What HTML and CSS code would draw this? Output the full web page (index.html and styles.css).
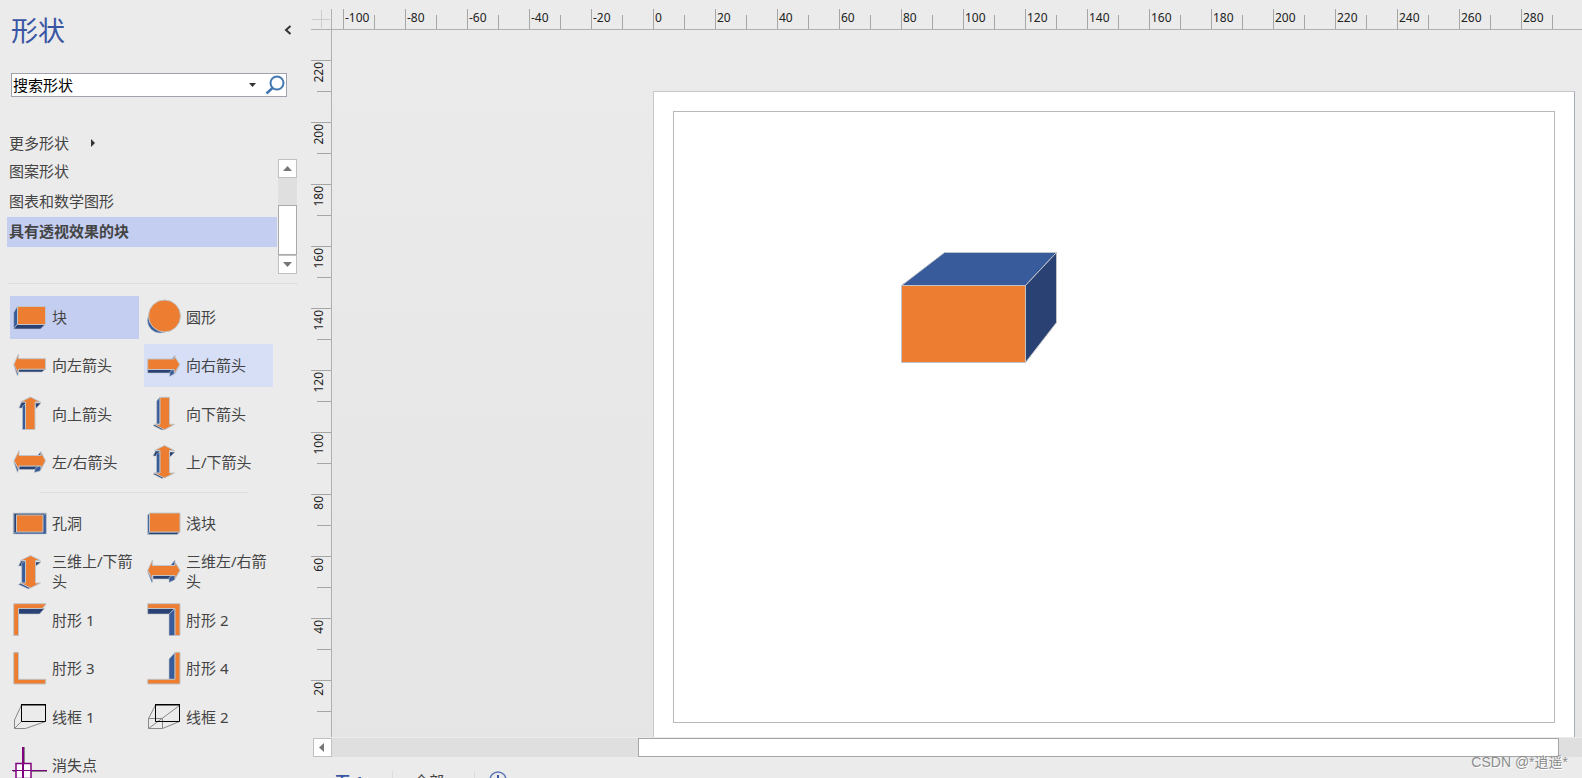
FILE: index.html
```html
<!DOCTYPE html>
<html lang="zh-CN">
<head>
    <meta charset="UTF-8">
    <meta name="viewport" content="width=device-width, initial-scale=1.0">
    <title>形状</title>
    <link rel="stylesheet" href="styles.css">
</head>
<body>
    <aside class="sidebar">
        <div class="sidebar-header">
            <h1>形状</h1>
            <button class="collapse-btn" aria-label="折叠">
                <svg width="8" height="10" viewBox="0 0 8 10"><path d="M6.500 1 2 5l4.500 4" fill="none" stroke="#333" stroke-width="2"/></svg>
            </button>
        </div>

        <div class="search-box">
            <input type="text" id="search" value="搜索形状" aria-label="搜索形状">
            <button class="search-drop" aria-label="搜索选项">
                <svg width="7" height="4" viewBox="0 0 7 4"><path d="M0 0h7L3.500 4z" fill="#333"/></svg>
            </button>
            <button class="search-btn" aria-label="搜索">
                <svg width="20" height="20" viewBox="0 0 20 20"><circle cx="12" cy="8" r="6.500" fill="none" stroke="#4478b4" stroke-width="2"/><path d="M8 12.500 1.500 18.500" stroke="#4478b4" stroke-width="2.500"/></svg>
            </button>
        </div>

        <button class="more-shapes">更多形状
            <svg width="4" height="8" viewBox="0 0 4 8"><path d="M0 0v8l4-4z" fill="#333"/></svg>
        </button>

        <div class="stencils">
            <ul class="stencil-list">
                <li>图案形状</li>
                <li>图表和数学图形</li>
                <li class="active">具有透视效果的块</li>
            </ul>
            <div class="vscroll">
                <button aria-label="向上滚动"><svg width="9" height="5" viewBox="0 0 9 5"><path d="M0 5h9L4.500 0z" fill="#777"/></svg></button>
                <div class="vscroll-thumb"></div>
                <button aria-label="向下滚动"><svg width="9" height="5" viewBox="0 0 9 5"><path d="M0 0h9L4.500 5z" fill="#777"/></svg></button>
            </div>
        </div>

        <div class="shapes">
            <button class="shape selected">
                <svg class="icon" viewBox="0 0 34 34">
                    <path class="mid" d="M.7 11.500 4.500 5v18L.7 28z"/>
                    <path class="dark" d="M.7 28l3.800-5h28l-5 5z"/>
                    <path class="front" d="M4.500 5.500h28v18h-28z"/>
                </svg>
                <span>块</span>
            </button>
            <button class="shape">
                <svg class="icon" viewBox="0 0 34 34">
                    <circle class="mid" cx="13" cy="19.500" r="12.500"/>
                    <circle class="front" cx="17.500" cy="15" r="16"/>
                </svg>
                <span>圆形</span>
            </button>
            <button class="shape">
                <svg class="icon" viewBox="0 0 34 34">
                    <path class="mid" d="M.7 16l5 7-1.200 4z"/>
                    <path class="dark" d="M5.500 20h27l-3.500 3H5.500z"/>
                    <path class="front" d="M.8 15.500 5.500 5v4.700h27v10.500h-27V25z"/>
                </svg>
                <span>向左箭头</span>
            </button>
            <button class="shape hover">
                <svg class="icon" viewBox="0 0 34 34">
                    <path class="mid" d="M24 11l4-4.500V12z"/>
                    <path class="dark" d="M.7 20.500h26l-3 3.500H.7z"/>
                    <path class="mid" d="M32 17l-4 7.500-5.500 3 .5-5z"/>
                    <path class="front" d="M.7 10h26.500V6.500l5.500 9-5.500 9v-4H.7z"/>
                </svg>
                <span>向右箭头</span>
            </button>
            <button class="shape">
                <svg class="icon" viewBox="0 0 34 34">
                    <path class="dark" d="M6 10l2.500-6h5l-4 6zM22 5h6l-5 5.500z"/>
                    <path class="mid" d="M9.500 8l3-2v25.500h-3z"/>
                    <path class="front" d="M7.500 4l10-5 10 5H22v27.500h-9.500V4z"/>
                </svg>
                <span>向上箭头</span>
            </button>
            <button class="shape">
                <svg class="icon" viewBox="0 0 34 34">
                    <path class="mid" d="M9.700 3l3.300-4v27H9.700z"/>
                    <path class="dark" d="M6 27.500l3-1.500 9 5-3 1z"/>
                    <path class="front" d="M13-.700h9.500v27h5l-10 5.500-10-5.500H13z"/>
                </svg>
                <span>向下箭头</span>
            </button>
            <button class="shape">
                <svg class="icon" viewBox="0 0 34 34">
                    <path class="mid" d="M.7 15.500l5 7-1.200 4zM24 10l4-4.500V12z"/>
                    <path class="dark" d="M5 20h22l-2 3.500H5z"/>
                    <path class="mid" d="M32 16l-5 9-5.500 1.500.5-4z"/>
                    <path class="front" d="M1 14.700 6 4.500v5h22v-3.500l4.500 8.700-4.500 8.500V20H6v4z"/>
                </svg>
                <span>左/右箭头</span>
            </button>
            <button class="shape">
                <svg class="icon" viewBox="0 0 34 34">
                    <path class="dark" d="M6 10l2.500-5h5l-4 5zM22 6h6l-5 5z"/>
                    <path class="mid" d="M9.500 8l3.500-2v22H9.500z"/>
                    <path class="dark" d="M6 28l3-1.500 9 4.500-3 1.500z"/>
                    <path class="front" d="M7.500 4.500l10-5 10 5h-5v22.500h5l-10 5-10-5H13V4.500z"/>
                </svg>
                <span>上/下箭头</span>
            </button>
        </div>

        <hr class="group-line">

        <div class="shapes">
            <button class="shape">
                <svg class="icon" viewBox="0 0 34 34">
                    <path class="mid" d="M.3 6h33v21H.3z"/>
                    <path class="dark" d="M1 6.500h32l-3 2H3.500V25L1 26.500z"/>
                    <path class="front" d="M3.500 8H30v17H3.500z"/>
                </svg>
                <span>孔洞</span>
            </button>
            <button class="shape">
                <svg class="icon" viewBox="0 0 34 34">
                    <path class="mid" d="M.7 8l2-2v19l-2 2.500z"/>
                    <path class="dark" d="M.7 27.500l2-2.500H33l-3 2.500z"/>
                    <path class="front" d="M2.500 6H33v19H2.500z"/>
                </svg>
                <span>浅块</span>
            </button>
            <button class="shape">
                <svg class="icon" viewBox="0 0 34 34">
                    <path class="dark" d="M5.500 11l2.500-5h5l-3 5zM22 7h6l-5 4z"/>
                    <path class="mid" d="M8.700 8l3.800-2v23H8.700z"/>
                    <path class="mid" d="M5.500 29.500l3-2 9 5-2 1.500z"/>
                    <path class="front" d="M7.500 5.500l10-5 10 5h-5v22.500h5l-10 5-10-5h5V5.500z"/>
                </svg>
                <span>三维上/下箭头</span>
            </button>
            <button class="shape">
                <svg class="icon" viewBox="0 0 34 34">
                    <path class="mid" d="M.5 16.500l5.500 7-1 4.500zM23 11l5-6v7z"/>
                    <path class="dark" d="M6 20h21l-3 4H6z"/>
                    <path class="mid" d="M32 17l-4.500 8-5.500 2.500v-5z"/>
                    <path class="front" d="M.7 15.300 5.500 5v5.500H28V7l5 8.300-5 8.500v-3.300H5.500V25z"/>
                </svg>
                <span>三维左/右箭头</span>
            </button>
            <button class="shape">
                <svg class="icon" viewBox="0 0 34 34">
                    <path class="dark" d="M5.500 4.500h26l-5 5.500h-21z"/>
                    <path class="front" d="M.7-.300h32v1l-3.500 3.800H5.500v27H.7z"/>
                </svg>
                <span>肘形 1</span>
            </button>
            <button class="shape">
                <svg class="icon" viewBox="0 0 34 34">
                    <path class="dark" d="M.7 4.500h27L22 10H.7z"/>
                    <path class="mid" d="M22 10l6-5.500v27h-6z"/>
                    <path class="front" d="M.7-.300H33v31.800h-5v-27H.7z"/>
                </svg>
                <span>肘形 2</span>
            </button>
            <button class="shape">
                <svg class="icon" viewBox="0 0 34 34">
                    <path class="front" d="M.7.300h4.800v27h27.200v4.700H.7z"/>
                </svg>
                <span>肘形 3</span>
            </button>
            <button class="shape">
                <svg class="icon" viewBox="0 0 34 34">
                    <path class="mid" d="M22 7l6-6.500v27h-6z"/>
                    <path class="front" d="M.7 27.300H28V.300h5V32H.7z"/>
                </svg>
                <span>肘形 4</span>
            </button>
            <button class="shape">
                <svg class="icon" viewBox="0 0 34 34">
                    <path class="wire" d="M8.500 4l-7 15v8.500h11l20-7M1.500 27.500l7-7"/>
                    <path class="frame" d="M8.500 4h24v16.500h-24z"/>
                    <path class="frame" d="M8 3.500h25"/>
                </svg>
                <span>线框 1</span>
            </button>
            <button class="shape">
                <svg class="icon" viewBox="0 0 34 34">
                    <path class="wire" d="M8.500 4l-7 13.500v10h14v-10h-14M1.500 27.500l31-23M15.500 27.500l17-7"/>
                    <path class="frame" d="M8.500 4h24v16.500h-24z"/>
                    <path class="frame" d="M8 3.500h25"/>
                </svg>
                <span>线框 2</span>
            </button>
            <button class="shape">
                <svg class="icon" viewBox="0 0 34 34">
                    <path d="M11.500-2v16M0 22.500h34" stroke="#888" fill="none"/>
                    <path d="M3 14.500h15v15H3z" fill="#fff" stroke="#800080" stroke-width="1.500"/>
                    <path d="M10-2v32" stroke="#800080" stroke-width="2" fill="none"/>
                    <path d="M-1 21.500h35" stroke="#800080" fill="none"/>
                </svg>
                <span>消失点</span>
            </button>
        </div>
    </aside>

    <main class="workspace">
        <div class="corner">
            <svg width="18" height="18" viewBox="0 0 18 18"><path d="M9.500 0v18M0 9.500h18" stroke="#ccc"/></svg>
        </div>
        <div class="ruler-h">
            <span>-100</span><span>-80</span><span>-60</span><span>-40</span><span>-20</span><span>0</span><span>20</span><span>40</span><span>60</span><span>80</span><span>100</span><span>120</span><span>140</span><span>160</span><span>180</span><span>200</span><span>220</span><span>240</span><span>260</span><span>280</span>
        </div>
        <div class="ruler-v">
            <div><span>220</span></div>
            <div><span>200</span></div>
            <div><span>180</span></div>
            <div><span>160</span></div>
            <div><span>140</span></div>
            <div><span>120</span></div>
            <div><span>100</span></div>
            <div><span>80</span></div>
            <div><span>60</span></div>
            <div><span>40</span></div>
            <div><span>20</span></div>
        </div>
        <div class="canvas">
            <div class="page">
                <div class="page-margin"></div>
                <!-- 透视块 -->
                <svg class="block" width="157" height="120" viewBox="0 0 157 120">
                    <path class="mid" d="M.5 33.500 43.500.5h112l-31 33z"/>
                    <path class="dark" d="M124.500 33.500l31-33v70l-31 40z"/>
                    <path class="front" d="M.5 33.500h124v77H.5z"/>
                </svg>
            </div>
        </div>
        <div class="hscroll">
            <button aria-label="向左滚动"><svg width="5" height="9" viewBox="0 0 5 9"><path d="M5 0v9L0 4.500z" fill="#777"/></svg></button>
            <div class="hscroll-thumb"></div>
        </div>
        <div class="tabs">
            <button class="tab current">页-1</button>
            <button class="tab">全部</button>
            <button class="tab-add" aria-label="插入页">
                <svg width="18" height="18" viewBox="0 0 18 18"><circle cx="9" cy="9" r="8" fill="none" stroke="#5b74b8" stroke-width="1.500"/><path d="M9 4v10M4 9h10" stroke="#3955a3" stroke-width="2"/></svg>
            </button>
        </div>
    </main>

    <div class="watermark">CSDN @*逍遥*</div>
</body>
</html>
```
FILE: styles.css
```css
* {
    margin: 0;
    padding: 0;
    box-sizing: border-box;
    font-family: "Noto Sans", "Noto Sans CJK SC", sans-serif;
}

body {
    display: flex;
    height: 100vh;
    overflow: hidden;
    background: #ebebeb;
    color: #444;
    font-size: 15px;
    line-height: 20px;
}

button {
    background: none;
    border: none;
    color: inherit;
    font-size: 15px;
    line-height: 20px;
    text-align: left;
    cursor: pointer;
}

svg {
    display: block;
    flex: none;
}

/* 左侧形状面板 */
.sidebar {
    flex: 0 0 311px;
    display: flex;
    flex-direction: column;
    overflow: hidden;
}

.sidebar-header {
    flex: none;
    display: flex;
    justify-content: space-between;
    align-items: center;
    height: 60px;
    padding: 0 19px 0 11px;
}

.sidebar-header h1 {
    color: #3955a3;
    font-size: 27px;
    font-weight: 400;
    line-height: 40px;
    padding-top: 2px;
}

.search-box {
    flex: none;
    display: flex;
    align-items: center;
    height: 24px;
    margin: 13px 24px 0 11px;
    background: #fff;
    border: 1px solid #a0a3ab;
}

.search-box input {
    flex: 1;
    min-width: 0;
    height: 22px;
    padding: 0 0 2px 1px;
    border: none;
    outline: none;
    background: none;
    color: #000;
    font-size: 15px;
}

.search-drop {
    padding: 8px 9px 9px 8px;
}

.search-btn {
    padding-right: 1px;
}

.more-shapes {
    flex: none;
    display: flex;
    align-items: center;
    gap: 22px;
    height: 28px;
    margin: 32px 0 2px;
    padding-left: 9px;
}

.stencils {
    flex: none;
    display: flex;
    height: 125px;
    margin: 0 13px 0 7px;
    border-bottom: 1px solid #dfdfdf;
}

.stencil-list {
    flex: 1;
    list-style: none;
    margin-right: 1px;
    margin-top: -2px;
}

.stencil-list li {
    height: 30px;
    padding-left: 2px;
    line-height: 29px;
}

.stencil-list .active {
    background: #c3cef1;
    font-weight: 700;
    line-height: 28px;
}

.vscroll {
    display: flex;
    flex-direction: column;
    justify-content: space-between;
    width: 19px;
    height: 115px;
    margin-right: 1px;
    background: #dfdfdf;
}

.vscroll button,
.hscroll button {
    display: flex;
    align-items: center;
    justify-content: center;
    width: 19px;
    height: 19px;
    background: #fff;
    border: 1px solid #c0c0c0;
}

.hscroll button {
    padding-right: 2px;
}

.vscroll-thumb {
    height: 50px;
    margin-top: 27px;
    background: #fff;
    border: 1px solid #aaa;
}

.shapes {
    flex: none;
    display: grid;
    grid-template-columns: 129px 129px;
    grid-auto-rows: 43px 44px;
    gap: 5px;
    margin: 12px 0 0 10px;
}

.shape {
    display: flex;
    align-items: center;
    gap: 5px;
    height: 43px;
    padding: 0 0 1px 3px;
}

.shape.selected {
    background: #c3cef1;
}

.shape.hover {
    background: #d7dff7;
}

.icon {
    width: 34px;
    height: 34px;
    align-self: flex-start;
    margin-top: 5px;
    overflow: visible;
}

.group-line {
    flex: none;
    width: 209px;
    margin: 7px 0 -3px 39px;
    border: none;
    border-top: 1px solid #dfdfdf;
}

.front,
.mid,
.dark {
    stroke: #c0c4c8;
    stroke-width: 1;
}

.icon .mid,
.icon .dark {
    stroke-width: .6;
}

.front { fill: #ed7d31; }
.mid { fill: #385c9b; }
.dark { fill: #294273; }

.wire {
    fill: none;
    stroke: #888;
}

.frame {
    fill: none;
    stroke: #000;
}

/* 绘图区 */
.workspace {
    flex: 1;
    min-width: 0;
    display: grid;
    grid-template-columns: 21px minmax(0, 1fr);
    grid-template-rows: 21px minmax(0, 1fr) 21px 20px;
    padding-top: 9px;
}

.corner {
    padding: 1px;
    border-right: 1px solid #b0b0b0;
    border-bottom: 1px solid #b0b0b0;
}

.ruler-h,
.ruler-v {
    display: flex;
    overflow: hidden;
    color: #222;
    font-size: 12px;
    line-height: 16px;
}

.ruler-h {
    padding-left: 11px;
    border-bottom: 1px solid #b0b0b0;
    line-height: 18px;
}

.ruler-h span {
    flex: 0 0 62px;
    padding-left: 1px;
    border-left: 1px solid #a6a6a6;
    background: linear-gradient(#a6a6a6, #a6a6a6) 30px 6px / 1px 14px no-repeat;
}

.ruler-v {
    flex-direction: column;
    padding-top: 30px;
    border-right: 1px solid #b0b0b0;
}

.ruler-v div {
    flex: 0 0 62px;
    padding-top: 1px;
    border-top: 1px solid #a6a6a6;
    background: linear-gradient(#a6a6a6, #a6a6a6) 6px 30px / 14px 1px no-repeat;
}

.ruler-v span {
    display: block;
    width: 16px;
    writing-mode: vertical-rl;
    transform: rotate(180deg);
}

.canvas {
    display: flex;
    padding: 61px 7px 0 321px;
    background: linear-gradient(#ebebeb, #e5e5e5);
}

.page {
    position: relative;
    flex: 1;
    display: flex;
    padding: 19px 19px 14px;
    background: #fff;
    border: 1px solid #c6c8cb;
    border-right-color: #a5adb8;
    border-bottom: none;
}

.page-margin {
    flex: 1;
    border: 1px solid #b8b8b8;
}

.block {
    position: absolute;
    left: 247px;
    top: 160px;
}

.hscroll {
    grid-column: 1 / -1;
    display: flex;
    margin: 1px 0 1px 2px;
    background: #dfdfdf;
}

.hscroll-thumb {
    flex: 1;
    margin: 0 23px 0 306px;
    background: #fff;
    border: 1px solid #a6a6a6;
}

.tabs {
    grid-column: 1 / -1;
    display: flex;
    align-items: flex-start;
    height: 20px;
    padding-top: 13px;
    overflow: hidden;
}

.tab {
    flex: none;
    width: 82px;
    height: 20px;
    padding-left: 21px;
    border-right: 1px solid #dcdcdc;
}

.tab.current {
    padding-left: 24px;
    color: #3955a3;
    font-weight: 700;
}

.tab-add {
    margin-left: 14px;
}

.watermark {
    position: absolute;
    right: 14px;
    bottom: 6px;
    color: #8c8c8c;
    font-family: "Liberation Sans", "Noto Sans CJK SC", sans-serif;
    font-size: 14px;
    text-shadow: 1px 1px 0 #fff;
}
```
